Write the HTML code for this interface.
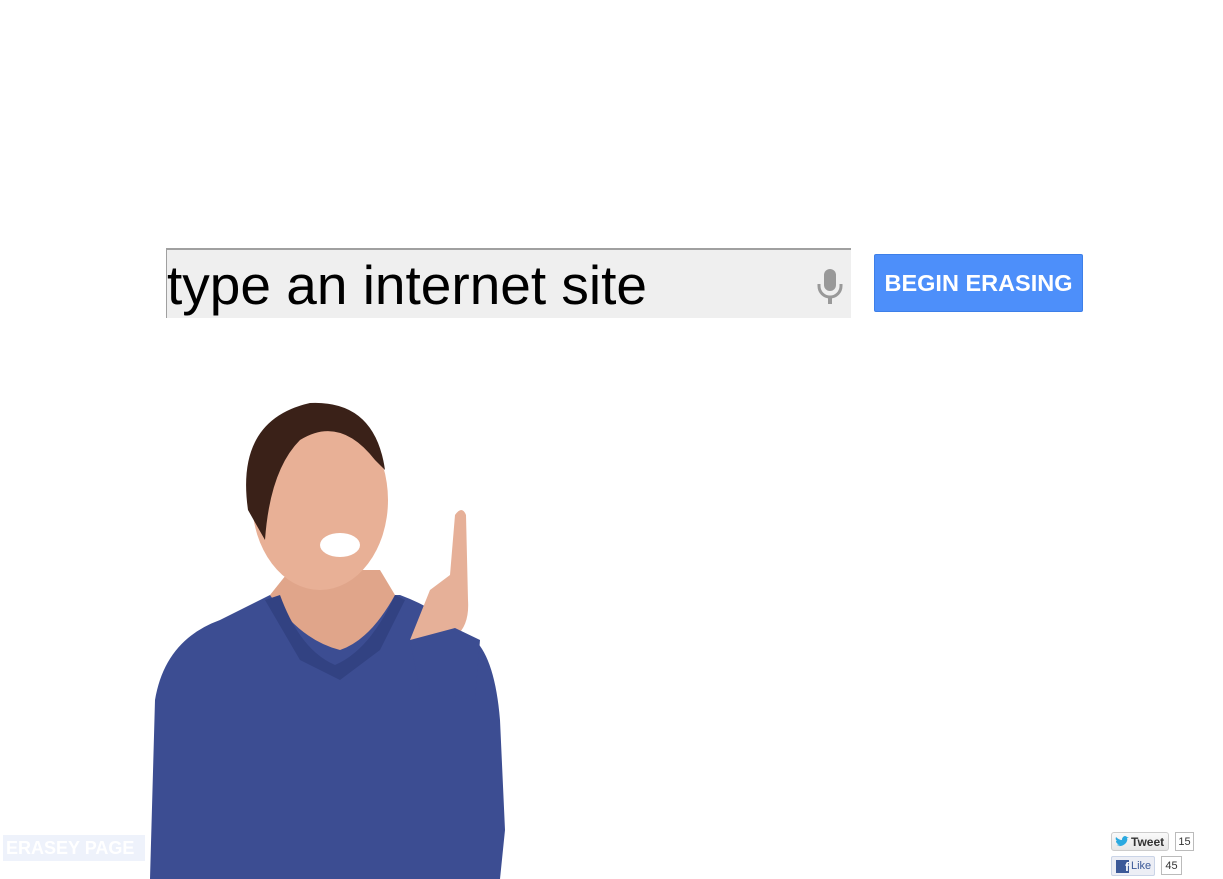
<!DOCTYPE html>
<html><head><style>
body{margin:0;width:1223px;height:879px;background:#fff;position:relative;overflow:hidden;font-family:"Liberation Sans",Arial,sans-serif}
.inp{position:absolute;left:166px;top:248px;width:685px;height:70px;background:#efefef;border-top:2px solid #a0a0a0;border-left:1px solid #a0a0a0;box-sizing:border-box}
.inp span{position:absolute;left:0px;top:5px;font-size:55px;color:#000;line-height:60px}
.btn{position:absolute;left:874px;top:254px;width:209px;height:58px;background:#4d8ffa;border:1px solid #3d7fe8;box-sizing:border-box;border-radius:2px;color:#fff;font-weight:bold;font-size:23.5px;text-align:center;line-height:56px}
.er{position:absolute;left:3px;top:835px;width:142px;height:26px;background:#eef2fb;color:#fff;font-weight:bold;font-size:18px;line-height:27px;padding-left:3px;box-sizing:border-box}
.tw{position:absolute;left:1111px;top:832px;width:58px;height:19px;border:1px solid #ccc;border-radius:3px;background:linear-gradient(#fafafa,#e6e6e6);font-size:12px;font-weight:bold;color:#333;line-height:18px;box-sizing:border-box;padding-left:19px}
.cnt{position:absolute;height:19px;border:1px solid #bbb;background:#fff;font-size:11px;line-height:18px;text-align:center;box-sizing:border-box;color:#333}
.lk{position:absolute;left:1111px;top:856px;width:44px;height:20px;border:1px solid #cad4e7;border-radius:2px;background:#eceef5;font-size:11px;color:#3b5998;line-height:18px;box-sizing:border-box;padding-left:19px}
</style></head><body>
<div class="inp"><span>type an internet site</span>
<svg style="position:absolute;left:648px;top:17px" width="30" height="40" viewBox="0 0 30 40"><rect x="9" y="2" width="12" height="22" rx="6" fill="#999"/><path d="M4 17v2a11 11 0 0 0 22 0v-2" stroke="#999" stroke-width="3" fill="none"/><rect x="13" y="29" width="4" height="8" fill="#999"/></svg></div>
<div class="btn">BEGIN ERASING</div>
<svg style="position:absolute;left:140px;top:395px" width="380" height="484" viewBox="140 395 380 484">
<path d="M150 879 L155 700 Q165 640 220 620 L270 595 L400 595 Q440 610 455 630 L475 640 Q495 660 500 720 L505 830 L500 879Z" fill="#3c4d92"/>
<path d="M270 595 Q300 640 340 650 Q370 640 395 595 L380 570 L290 570Z" fill="#e0a58a"/>
<path d="M265 600 L300 660 L340 680 L380 650 L405 600 L395 595 Q370 650 335 665 Q300 650 280 595Z" fill="#324282"/>
<ellipse cx="320" cy="500" rx="68" ry="90" fill="#e8b096"/>
<path d="M248 510 Q235 420 310 403 Q375 400 385 470 L375 460 Q340 415 300 440 Q270 470 265 540 Z" fill="#3a2118"/>
<ellipse cx="340" cy="545" rx="20" ry="12" fill="#fff"/>
<path d="M410 640 L430 590 L450 575 L455 515 Q462 505 466 515 L468 600 Q470 630 450 640 Z" fill="#e6b098"/>
<path d="M410 640 L455 628 L480 640 L475 700 L420 690Z" fill="#3c4d92"/>
</svg>
<div class="er">ERASEY PAGE</div>
<div class="tw"><svg style="position:absolute;left:3px;top:3px" width="14" height="12" viewBox="0 0 14 12"><path d="M1 9q5 3 10-2 2-3 1-5l2-1-2 0q-2-2-4 0-1 1-1 3Q4 4 1 1q-1 3 1 4L1 5q0 2 2 3H2q1 1 3 1-2 1-4 0z" fill="#2aa9e0"/></svg>Tweet</div>
<div class="cnt" style="left:1175px;top:832px;width:19px">15</div>
<div class="lk"><span style="position:absolute;left:4px;top:3px;width:13px;height:13px;background:#3b5998;color:#fff;font-weight:bold;font-size:12px;line-height:15px;text-align:right;overflow:hidden">f</span>Like</div>
<div class="cnt" style="left:1161px;top:856px;width:21px">45</div>
</body></html>
